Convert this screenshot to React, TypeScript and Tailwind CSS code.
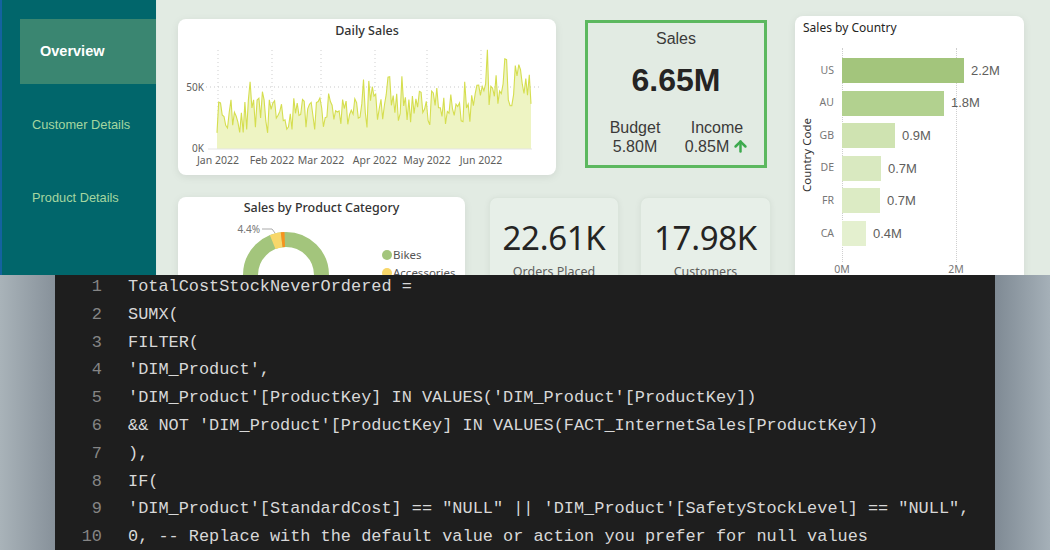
// App.tsx — screenshot of a Power BI overview page (top) above a DAX code snippet (bottom).

import { ArrowUp } from 'lucide-react'

// ─── Data ────────────────────────────────────────────────────────────────────

function seeded(seed: number) {
  let s = seed
  return () => {
    s = (s * 16807) % 2147483647
    return s / 2147483647
  }
}

const DAYS = 181
const dailyValues: number[] = (() => {
  const r = seeded(11)
  const out: number[] = []
  for (let d = 0; d < DAYS; d++) {
    const base = d < 58 ? 27 : d < 90 ? 31 : d < 148 ? 33 : 47
    let v = base + (r() - 0.5) * 28
    if (r() < 0.09) v += 16
    out.push(Math.max(9, Math.min(78, v)))
  }
  out[155] = 80
  out[166] = 72
  out[173] = 68
  out[98] = 58
  out[84] = 56
  return out
})()

const countries = [
  { code: 'US', value: '2.2M', width: 122, color: '#a3c57c' },
  { code: 'AU', value: '1.8M', width: 102, color: '#b2d18f' },
  { code: 'GB', value: '0.9M', width: 53, color: '#cfe3b1' },
  { code: 'DE', value: '0.7M', width: 39, color: '#d9e9c0' },
  { code: 'FR', value: '0.7M', width: 38, color: '#dcebc4' },
  { code: 'CA', value: '0.4M', width: 24, color: '#e4f0cf' },
]

const codeLines = [
  'TotalCostStockNeverOrdered =',
  'SUMX(',
  'FILTER(',
  "'DIM_Product',",
  "'DIM_Product'[ProductKey] IN VALUES('DIM_Product'[ProductKey])",
  "&& NOT 'DIM_Product'[ProductKey] IN VALUES(FACT_InternetSales[ProductKey])",
  '),',
  'IF(',
  "'DIM_Product'[StandardCost] == \"NULL\" || 'DIM_Product'[SafetyStockLevel] == \"NULL\",",
  '0, -- Replace with the default value or action you prefer for null values',
]

// ─── Sidebar ─────────────────────────────────────────────────────────────────

function Sidebar() {
  return (
    <div className="w-[156px] shrink-0 bg-[#01666b] border-l-2 border-[#1462a0] flex flex-col font-['Liberation_Sans',sans-serif]">
      <div className="mt-[19px] ml-[18px] h-[65px] bg-[#3a8671] flex items-center pl-[20px] text-[14.5px] font-bold text-white">
        Overview
      </div>
      <div className="mt-[32px] pl-[30px] h-[18px] flex items-center text-[12.8px] text-[#a5d6a0]">Customer Details</div>
      <div className="mt-[55px] pl-[30px] h-[18px] flex items-center text-[12.8px] text-[#a5d6a0]">Product Details</div>
    </div>
  )
}

// ─── Daily Sales chart ───────────────────────────────────────────────────────

function DailySales() {
  const px = (d: number) => 39 + (d * 314) / (DAYS - 1)
  const py = (v: number) => 108 - v * 1.24
  const line = dailyValues.map((v, d) => `${d === 0 ? 'M' : 'L'}${px(d).toFixed(1)} ${py(v).toFixed(1)}`).join(' ')
  const area = `${line} L${px(DAYS - 1)} 108 L${px(0)} 108 Z`
  const months = [
    { x: 40, t: 'Jan 2022' },
    { x: 94, t: 'Feb 2022' },
    { x: 143, t: 'Mar 2022' },
    { x: 197, t: 'Apr 2022' },
    { x: 249, t: 'May 2022' },
    { x: 303, t: 'Jun 2022' },
  ]
  return (
    <div className="w-[378px] h-[156px] bg-white rounded-[8px] shadow-[0_2px_8px_rgba(0,0,0,0.08)] font-['Noto_Sans',sans-serif]">
      <div className="h-[22px] pt-[4px] text-center text-[12.5px] leading-[16px] font-medium text-[#333]">Daily Sales</div>
      <svg width="378" height="134" className="block">
        <line x1="28" y1="46" x2="362" y2="46" stroke="#c9c9c9" strokeDasharray="1 3" />
        {months.map(m => (
          <line key={m.t} x1={m.x} y1="9" x2={m.x} y2="108" stroke="#cfcfcf" strokeDasharray="1 3" />
        ))}
        <path d={area} fill="#eef4c3" />
        <path d={line} fill="none" stroke="#d5de4f" strokeWidth="1.1" />
        <line x1="30" y1="108" x2="354" y2="108" stroke="#e5e5e5" />
        <text x="26" y="50" textAnchor="end" fontSize="10" fill="#605e5c">50K</text>
        <text x="26" y="111" textAnchor="end" fontSize="10" fill="#605e5c">0K</text>
        {months.map(m => (
          <text key={m.t + 'l'} x={m.x} y="123" textAnchor="middle" fontSize="10.5" fill="#605e5c">
            {m.t}
          </text>
        ))}
      </svg>
    </div>
  )
}

// ─── KPI cards ───────────────────────────────────────────────────────────────

function SalesCard() {
  return (
    <div className="w-[182px] h-[148px] border-[3px] border-[#5cb85f] flex flex-col items-center font-['Liberation_Sans',sans-serif] text-[#3b3a39]">
      <div className="mt-[6px] text-[16px] leading-[20px]">Sales</div>
      <div className="mt-[13px] text-[32px] leading-[36px] font-bold text-[#252423]">6.65M</div>
      <div className="mt-[20px] w-full grid grid-cols-2 px-[6px] text-[16px] leading-[19px]">
        <div className="flex flex-col items-center">
          <span>Budget</span>
          <span>5.80M</span>
        </div>
        <div className="flex flex-col items-center">
          <span>Income</span>
          <span className="flex items-center gap-[3px]">
            0.85M <ArrowUp size={17} strokeWidth={3.5} color="#3daa4e" />
          </span>
        </div>
      </div>
    </div>
  )
}

function NumberCard({ value, label, width }: { value: string; label: string; width: number }) {
  return (
    <div
      className="h-[100px] rounded-[8px] bg-[#e7efe8] border border-[#dbe5dc] shadow-[0_1px_6px_rgba(0,0,0,0.06)] flex flex-col items-center font-['Noto_Sans',sans-serif]"
      style={{ width }}
    >
      <div className="mt-[20px] text-[33px] leading-[40px] text-[#252423] tracking-[-0.3px]">{value}</div>
      <div className="mt-[6px] text-[12.5px] leading-[16px] text-[#605e5c]">{label}</div>
    </div>
  )
}

// ─── Product category donut ──────────────────────────────────────────────────

function arc(cx: number, cy: number, r: number, a0: number, a1: number) {
  const rad = (a: number) => (a * Math.PI) / 180
  const x0 = cx + r * Math.sin(rad(a0))
  const y0 = cy - r * Math.cos(rad(a0))
  const x1 = cx + r * Math.sin(rad(a1))
  const y1 = cy - r * Math.cos(rad(a1))
  return `M${x0} ${y0} A${r} ${r} 0 0 1 ${x1} ${y1}`
}

function ProductCategory() {
  return (
    <div className="w-[287px] h-[100px] bg-white rounded-[8px] shadow-[0_2px_8px_rgba(0,0,0,0.08)] font-['Noto_Sans',sans-serif]">
      <div className="h-[22px] pt-[3px] text-center text-[12.5px] leading-[16px] font-medium text-[#333]">
        Sales by Product Category
      </div>
      <svg width="287" height="78" className="block">
        <circle cx="108" cy="56" r="35.5" fill="none" stroke="#a3c57c" strokeWidth="15" />
        <path d={arc(108, 56, 35.5, -22, -7)} fill="none" stroke="#f8d76a" strokeWidth="15" />
        <path d={arc(108, 56, 35.5, -7, -2)} fill="none" stroke="#f7931e" strokeWidth="15" />
        <path d="M84 10 L94 10 L97 14" fill="none" stroke="#aaa" strokeWidth="1" />
        <text x="82" y="14" textAnchor="end" fontSize="10" fill="#777">4.4%</text>
        <circle cx="209" cy="36" r="5" fill="#a3c57c" />
        <text x="215" y="40" fontSize="11.5" fill="#555">Bikes</text>
        <circle cx="209" cy="54" r="5" fill="#f8d76a" />
        <text x="215" y="58" fontSize="11.5" fill="#555">Accessories</text>
      </svg>
    </div>
  )
}

// ─── Sales by Country ────────────────────────────────────────────────────────

function SalesByCountry() {
  return (
    <div className="w-[229px] h-[290px] bg-white rounded-[8px] shadow-[0_2px_8px_rgba(0,0,0,0.08)] font-['Noto_Sans',sans-serif]">
      <div className="h-[22px] pt-[4px] pl-[8px] text-[12px] leading-[16px] text-[#252423]">Sales by Country</div>
      <div className="mt-[10px] flex">
        <div className="w-[24px] h-[214px] flex items-center justify-center">
          <span className="[writing-mode:vertical-rl] rotate-180 text-[11.5px] text-[#333]">Country Code</span>
        </div>
        <div className="w-[23px] pt-[10px] flex flex-col gap-[7.6px]">
          {countries.map(c => (
            <div key={c.code} className="h-[25px] flex items-center justify-end pr-[8px] text-[10.5px] text-[#777]">
              {c.code}
            </div>
          ))}
        </div>
        <div className="relative flex-1">
          <div className="absolute left-0 top-0 h-[214px] border-l border-dotted border-[#cfcfcf]" />
          <div className="absolute left-[114px] top-0 h-[214px] border-l border-dotted border-[#cfcfcf]" />
          <div className="relative pt-[10px] flex flex-col gap-[7.6px]">
            {countries.map(c => (
              <div key={c.code} className="h-[25px] flex items-center">
                <div className="h-[25px]" style={{ width: c.width, background: c.color }} />
                <span className="ml-[7px] text-[13px] text-[#605e5c] font-['Liberation_Sans',sans-serif]">{c.value}</span>
              </div>
            ))}
          </div>
          <div className="relative h-[16px] mt-[16px] text-[10.5px] text-[#777]">
            <span className="absolute left-0 -translate-x-1/2">0M</span>
            <span className="absolute left-[114px] -translate-x-1/2">2M</span>
          </div>
        </div>
      </div>
    </div>
  )
}

// ─── Dashboard ───────────────────────────────────────────────────────────────

function Dashboard() {
  return (
    <div className="h-[275px] flex overflow-hidden bg-[#e2ebe3]">
      <Sidebar />
      <div className="flex-1 flex pl-[21px] border-l border-[#dfe8e1]">
        <div className="w-[593px] flex flex-col">
          <div className="flex items-start pt-[19px]">
            <DailySales />
            <div className="ml-[29px] mt-[1px]">
              <SalesCard />
            </div>
          </div>
          <div className="flex mt-[22px]">
            <ProductCategory />
            <div className="ml-[24px]">
              <NumberCard value="22.61K" label="Orders Placed" width={130} />
            </div>
            <div className="ml-[21px]">
              <NumberCard value="17.98K" label="Customers" width={131} />
            </div>
          </div>
        </div>
        <div className="ml-[24px] mt-[16px]">
          <SalesByCountry />
        </div>
      </div>
    </div>
  )
}

// ─── Code snippet ────────────────────────────────────────────────────────────

function CodeBlock() {
  return (
    <div className="h-[275px] flex">
      <div className="w-[55px] bg-gradient-to-r from-[#a9b3b9] to-[#87919a]" />
      <div className="flex-1 bg-[#1e1e1e] overflow-hidden">
        <div className="-mt-[2px] font-['Liberation_Mono',monospace] text-[16.9px] leading-[27.8px] whitespace-pre">
          {codeLines.map((l, i) => (
            <div key={i} className="flex">
              <span className="w-[47px] text-right text-[#858585]">{i + 1}</span>
              <span className="ml-[26px] text-[#d8d8d8]">{l}</span>
            </div>
          ))}
        </div>
      </div>
      <div className="w-[55px] bg-gradient-to-r from-[#7f8a94] to-[#a5b0b8]" />
    </div>
  )
}

export default function App() {
  return (
    <div className="w-[1050px] h-[550px] overflow-hidden flex flex-col">
      <Dashboard />
      <CodeBlock />
    </div>
  )
}
